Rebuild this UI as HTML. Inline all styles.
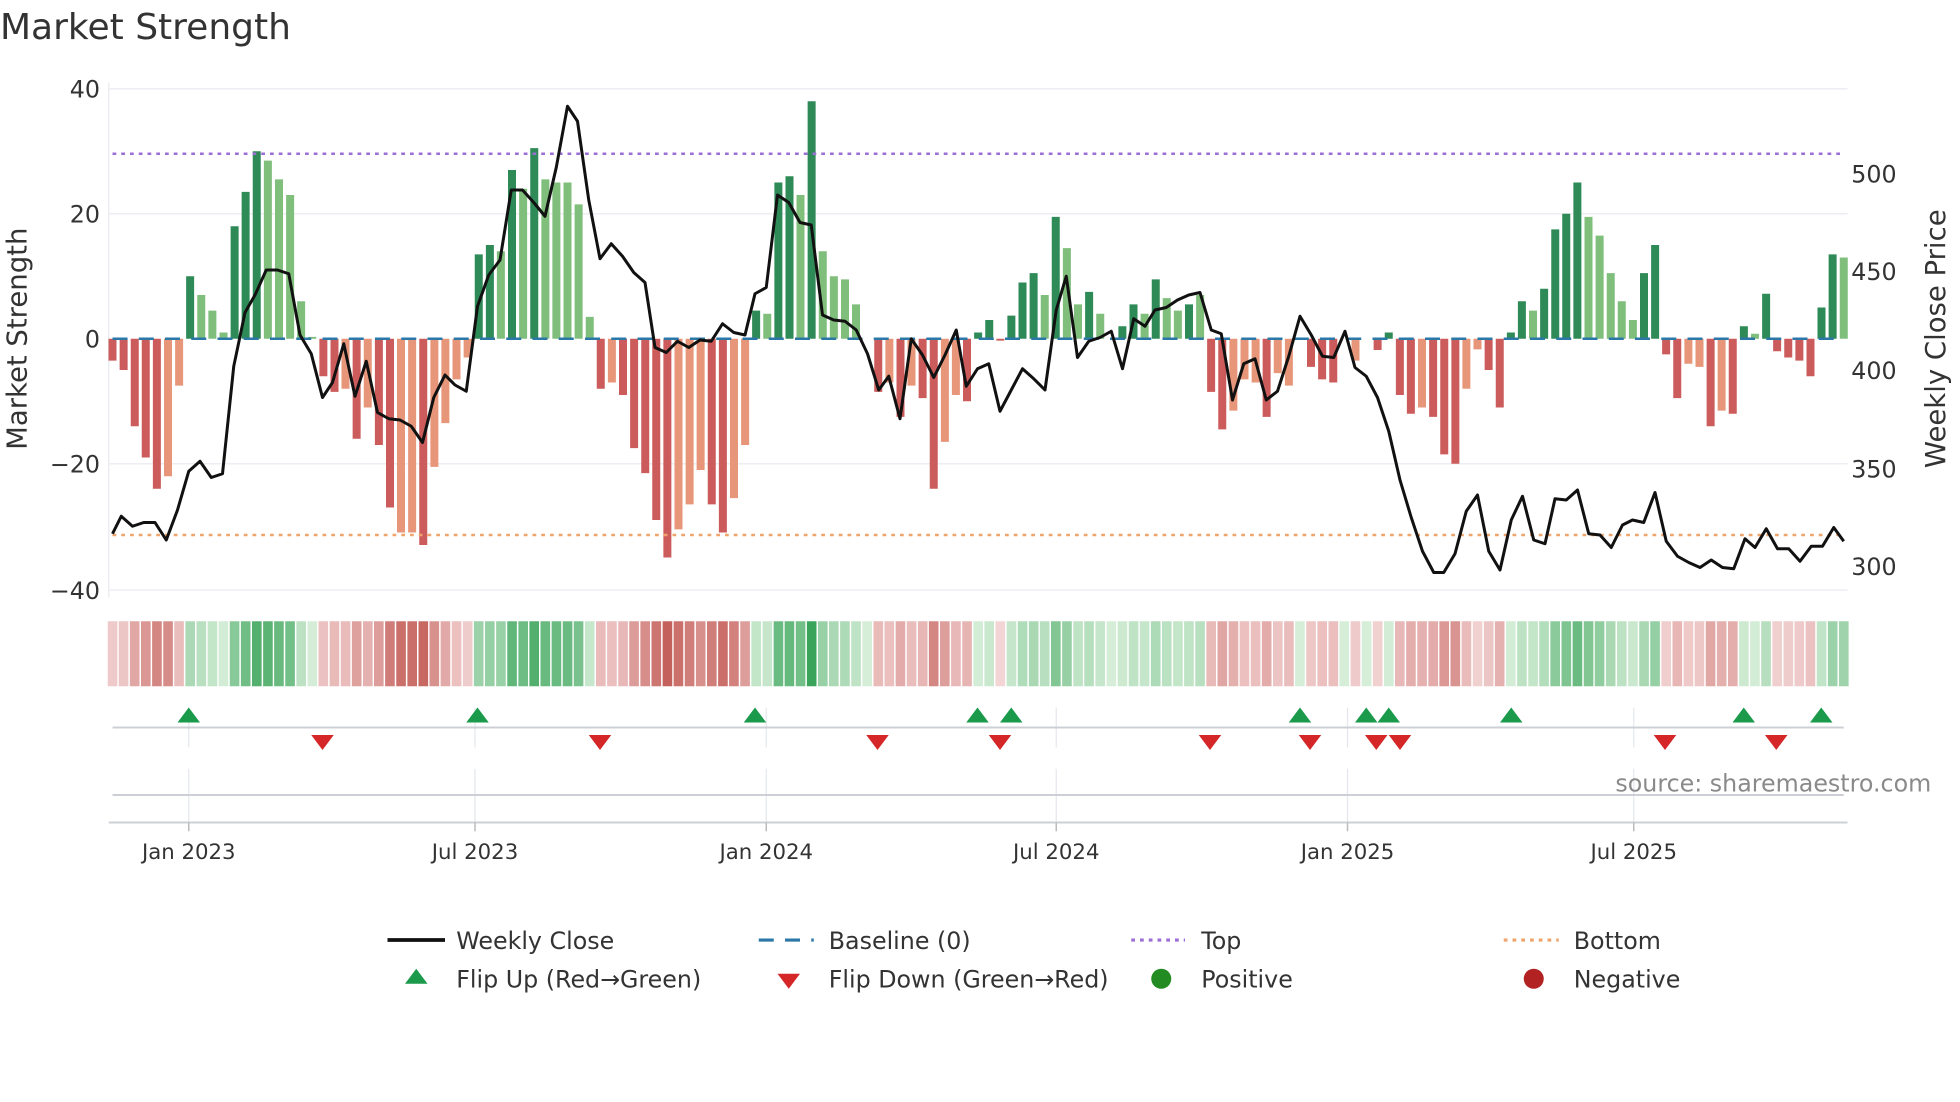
<!DOCTYPE html>
<html><head><meta charset="utf-8">
<style>
html,body{margin:0;padding:0;background:#fff;}
svg{display:block;font-family:"DejaVu Sans","Liberation Sans",sans-serif;}
</style></head>
<body>
<svg id="c" width="1960" height="1102" viewBox="0 0 1568 881.6" xmlns="http://www.w3.org/2000/svg">
<rect width="1568" height="882" fill="#fff"/>
<text x="0" y="31" font-size="28.8" fill="#333">Market Strength</text>
<g id="grid" stroke="#eceef3" stroke-width="1.2">
<line x1="87" y1="71" x2="1478" y2="71"/><line x1="87" y1="171" x2="1478" y2="171"/>
<line x1="87" y1="371" x2="1478" y2="371"/><line x1="87" y1="472" x2="1478" y2="472"/>
<line x1="87" y1="66" x2="87" y2="478"/>
</g>
<g font-size="19" fill="#333" text-anchor="end">
<text x="80" y="78">40</text><text x="80" y="178">20</text><text x="80" y="278">0</text>
<text x="80" y="378">−20</text><text x="80" y="479">−40</text>
</g>
<g font-size="19" fill="#333">
<text x="1481" y="146">500</text><text x="1481" y="224">450</text><text x="1481" y="303">400</text>
<text x="1481" y="382">350</text><text x="1481" y="460">300</text>
</g>
<text transform="translate(21,271) rotate(-90)" font-size="22" fill="#333" text-anchor="middle">Market Strength</text>
<text transform="translate(1556,271) rotate(-90)" font-size="22" fill="#333" text-anchor="middle">Weekly Close Price</text>
<g id="bars"></g>
<line x1="90" y1="271" x2="1475" y2="271" stroke="#2a77a8" stroke-width="2" stroke-dasharray="12,9"/>
<line x1="90" y1="123" x2="1475" y2="123" stroke="#9b6fd6" stroke-width="2" stroke-dasharray="3,4"/>
<line x1="90" y1="428" x2="1475" y2="428" stroke="#efa46b" stroke-width="2" stroke-dasharray="3,4"/>
<polyline id="price" fill="none" stroke="#111" stroke-width="2.4" stroke-linejoin="round"/>
<g id="heat"></g>
<g stroke="#e4e8ee" stroke-width="1">
<line x1="151" y1="566" x2="151" y2="598"/><line x1="380" y1="566" x2="380" y2="598"/><line x1="613" y1="566" x2="613" y2="598"/><line x1="845" y1="566" x2="845" y2="598"/><line x1="1078" y1="566" x2="1078" y2="598"/><line x1="1307" y1="566" x2="1307" y2="598"/>
<line x1="151" y1="615" x2="151" y2="658"/><line x1="380" y1="615" x2="380" y2="658"/><line x1="613" y1="615" x2="613" y2="658"/><line x1="845" y1="615" x2="845" y2="658"/><line x1="1078" y1="615" x2="1078" y2="658"/><line x1="1307" y1="615" x2="1307" y2="658"/>
</g>
<line x1="90" y1="582" x2="1475" y2="582" stroke="#ccd0d6" stroke-width="1.6"/>
<line x1="90" y1="636" x2="1475" y2="636" stroke="#ccd0d6" stroke-width="1.6"/>
<line x1="87" y1="658" x2="1478" y2="658" stroke="#ccd0d6" stroke-width="1.6"/>
<g stroke="#bbb" stroke-width="1.2">
<line x1="151" y1="658" x2="151" y2="665"/><line x1="380" y1="658" x2="380" y2="665"/><line x1="613" y1="658" x2="613" y2="665"/><line x1="845" y1="658" x2="845" y2="665"/><line x1="1078" y1="658" x2="1078" y2="665"/><line x1="1307" y1="658" x2="1307" y2="665"/>
</g>
<g id="marks"></g>
<text x="1545" y="633" font-size="19" fill="#8a8a8a" text-anchor="end">source: sharemaestro.com</text>
<g font-size="17" fill="#333" text-anchor="middle">
<text x="151" y="687">Jan 2023</text><text x="380" y="687">Jul 2023</text><text x="613" y="687">Jan 2024</text>
<text x="845" y="687">Jul 2024</text><text x="1078" y="687">Jan 2025</text><text x="1307" y="687">Jul 2025</text>
</g>
<g font-size="19" fill="#333">
<line x1="310" y1="752" x2="356" y2="752" stroke="#111" stroke-width="3"/>
<text x="365" y="759">Weekly Close</text>
<line x1="607" y1="752" x2="651" y2="752" stroke="#2a77a8" stroke-width="2.5" stroke-dasharray="12,9"/>
<text x="663" y="759">Baseline (0)</text>
<line x1="905" y1="752" x2="948" y2="752" stroke="#9b6fd6" stroke-width="2.5" stroke-dasharray="3,4"/>
<text x="961" y="759">Top</text>
<line x1="1203" y1="752" x2="1247" y2="752" stroke="#efa46b" stroke-width="2.5" stroke-dasharray="3,4"/>
<text x="1259" y="759">Bottom</text>
<polygon points="333,775 342,787 324,787" fill="#1a9a4a"/>
<text x="365" y="790">Flip Up (Red→Green)</text>
<polygon points="622,779 640,779 631,791" fill="#d62728"/>
<text x="663" y="790">Flip Down (Green→Red)</text>
<circle cx="929" cy="783" r="8" fill="#228b22"/>
<text x="961" y="790">Positive</text>
<circle cx="1227" cy="783" r="8" fill="#b22222"/>
<text x="1259" y="790">Negative</text>
</g>
</svg>
<script>
var V=[[-3.5,'D'],[-5,'D'],[-14,'D'],[-19,'D'],[-24,'D'],[-22,'L'],[-7.5,'L'],[10,'G'],[7,'g'],[4.5,'g'],[1,'g'],[18,'G'],[23.5,'G'],[30,'G'],[28.5,'g'],[25.5,'g'],[23,'g'],[6,'g'],[0.3,'g'],
[-6,'D'],[-8.5,'D'],[-8,'L'],[-16,'D'],[-11,'L'],[-17,'D'],[-27,'D'],[-31,'L'],[-31,'L'],[-33,'D'],[-20.5,'L'],[-13.5,'L'],[-6.5,'L'],[-3,'L'],
[13.5,'G'],[15,'G'],[14,'g'],[27,'G'],[24,'g'],[30.5,'G'],[25.5,'g'],[25,'g'],[25,'g'],[21.5,'g'],[3.5,'g'],
[-8,'D'],[-7,'L'],[-9,'D'],[-17.5,'D'],[-21.5,'D'],[-29,'D'],[-35,'D'],[-30.5,'L'],[-26.5,'L'],[-21,'L'],[-26.5,'D'],[-31,'D'],[-25.5,'L'],[-17,'L'],
[4.5,'G'],[4,'g'],[25,'G'],[26,'G'],[23,'g'],[38,'G'],[14,'g'],[10,'g'],[9.5,'g'],[5.5,'g'],[0,'g'],
[-8.5,'D'],[-7,'L'],[-12.5,'D'],[-7.5,'L'],[-9.5,'D'],[-24,'D'],[-16.5,'L'],[-9,'L'],[-10,'D'],
[1,'G'],[3,'G'],[-0.3,'D'],[3.7,'G'],[9,'G'],[10.5,'G'],[7,'g'],[19.5,'G'],[14.5,'g'],[5.5,'g'],[7.5,'G'],[4,'g'],[0,'g'],[2,'G'],[5.5,'G'],[4,'g'],[9.5,'G'],[6.5,'g'],[4.5,'g'],[5.5,'G'],[7,'g'],
[-8.5,'D'],[-14.5,'D'],[-11.5,'L'],[-6.5,'L'],[-7,'L'],[-12.5,'D'],[-5.5,'L'],[-7.5,'L'],[0,'L'],[-4.5,'D'],[-6.5,'D'],[-7,'D'],[0,'L'],[-3.5,'L'],[0,'L'],[-1.8,'D'],[1,'G'],
[-9,'D'],[-12,'D'],[-11,'L'],[-12.5,'D'],[-18.5,'D'],[-20,'D'],[-8,'L'],[-1.7,'L'],[-5,'D'],[-11,'D'],
[1,'G'],[6,'G'],[4.5,'g'],[8,'G'],[17.5,'G'],[20,'G'],[25,'G'],[19.5,'g'],[16.5,'g'],[10.5,'g'],[6,'g'],[3,'g'],[10.5,'G'],[15,'G'],
[-2.5,'D'],[-9.5,'D'],[-4,'L'],[-4.5,'L'],[-14,'D'],[-11.5,'L'],[-12,'D'],[2,'G'],[0.8,'g'],[7.2,'G'],[-2,'D'],[-3,'D'],[-3.5,'D'],[-6,'D'],[5,'G'],[13.5,'G'],[13,'g']];
var C={D:'#cc5c5c',L:'#e8967a',G:'#2e8a57',g:'#7fbf7b'};
var n=V.length,step=(1475-90)/(n-1),b='',h='';
function mix(a,c,t){var r=[0,1,2].map(function(i){var x=parseInt(a.substr(1+2*i,2),16),y=parseInt(c.substr(1+2*i,2),16);return Math.round(x+(y-x)*t);});return 'rgb('+r.join(',')+')';}
for(var i=0;i<n;i++){var v=V[i][0],x=90+i*step,w=6.4;
 var y=271-v*5,hh=Math.abs(v*5);
 if(hh>0.3)b+='<rect x="'+(x-w/2).toFixed(1)+'" y="'+Math.min(y,271).toFixed(1)+'" width="'+w+'" height="'+hh.toFixed(1)+'" fill="'+C[V[i][1]]+'"/>';
 var t=Math.min(1,Math.abs(v)/36),col=v>=0?mix('#d6eed8','#3aa45a',t):mix('#f3d6d6','#c45e58',t);
 h+='<rect x="'+(x-step/2+0.6).toFixed(1)+'" y="497" width="'+(step-1.2).toFixed(1)+'" height="52" fill="'+col+'"/>';}
document.getElementById('bars').innerHTML=b;document.getElementById('heat').innerHTML=h;
var P="90,427 97,413 106,421 115,418 124,418 133,432 142,408 151,377 160,369 169,382 178,379 187,293 196,250 204,236 213,216 222,216 231,219 240,268 249,283 258,318 266,306 275,275 284,317 293,289 302,330 311,335 320,336 329,341 338,354 347,318 356,300 364,308 373,313 382,245 391,220 400,208 409,152 418,152 427,162 436,173 445,134 454,85 462,97 471,160 480,207 489,195 498,205 507,218 516,226 524,278 533,282 542,273 551,278 560,272 569,273 578,259 587,266 596,268 604,235 613,230 622,156 631,162 640,178 649,180 658,252 667,256 676,257 685,264 694,283 703,312 711,301 720,335 729,271 738,284 747,302 756,284 765,264 773,309 782,295 791,291 800,329 809,312 818,295 827,303 836,312 845,248 853,221 862,286 871,273 880,270 889,265 898,295 907,255 916,261 924,248 933,246 942,240 951,236 960,234 969,264 977,267 986,320 995,291 1004,287 1013,320 1022,313 1031,285 1040,253 1049,268 1058,285 1067,286 1076,265 1084,294 1093,301 1102,318 1111,345 1120,384 1129,414 1138,441 1147,458 1155,458 1164,443 1173,409 1182,396 1191,441 1200,456 1209,416 1218,397 1227,432 1236,435 1244,399 1253,400 1262,392 1271,427 1280,428 1289,438 1298,420 1306,416 1315,418 1324,394 1333,433 1342,445 1351,450 1360,454 1369,448 1378,454 1387,455 1396,431 1404,438 1413,423 1422,439 1431,439 1440,449 1449,437 1458,437 1467,422 1475,433";
document.getElementById('price').setAttribute('points',P);
var up=[151,382,604,782,809,1040,1093,1111,1209,1395,1457],dn=[258,480,702,800,968,1048,1101,1120,1332,1421],m='';
up.forEach(function(x){m+='<polygon points="'+x+',566 '+(x+9)+',578 '+(x-9)+',578" fill="#1a9a4a"/>';});
dn.forEach(function(x){m+='<polygon points="'+(x-9)+',588 '+(x+9)+',588 '+x+',600" fill="#d62728"/>';});
document.getElementById('marks').innerHTML=m;
</script>
</body></html>
